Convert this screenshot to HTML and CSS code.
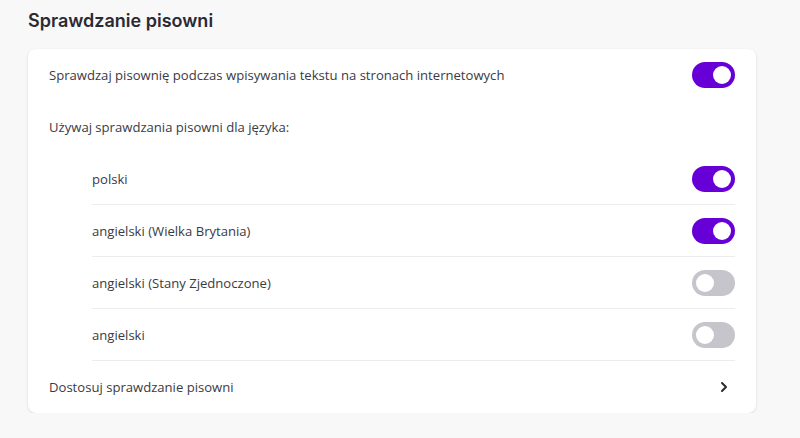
FILE: index.html
```html
<!DOCTYPE html>
<html lang="pl">
<head>
    <meta charset="UTF-8">
    <meta name="viewport" content="width=device-width, initial-scale=1.0">
    <title>Sprawdzanie pisowni</title>
    <link rel="stylesheet" href="styles.css">
</head>
<body>
    <div class="page">
        <h2 class="section-title">Sprawdzanie pisowni</h2>

        <div class="card">
            <div class="row">
                <span>Sprawdzaj pisownię podczas wpisywania tekstu na stronach internetowych</span>
                <span class="toggle on"></span>
            </div>

            <div class="row">
                <span>Używaj sprawdzania pisowni dla języka:</span>
            </div>

            <div class="lang-list">
                <div class="row lang">
                    <span>polski</span>
                    <span class="toggle on"></span>
                </div>
                <div class="row lang">
                    <span>angielski (Wielka Brytania)</span>
                    <span class="toggle on"></span>
                </div>
                <div class="row lang">
                    <span>angielski (Stany Zjednoczone)</span>
                    <span class="toggle"></span>
                </div>
                <div class="row lang">
                    <span>angielski</span>
                    <span class="toggle"></span>
                </div>
            </div>

            <div class="row link">
                <span>Dostosuj sprawdzanie pisowni</span>
                <svg class="chevron" width="8" height="12" viewBox="0 0 8 12">
                    <path d="M2 2 L6 6 L2 10" fill="none" stroke="#2b2a33" stroke-width="2" stroke-linecap="round" stroke-linejoin="round"/>
                </svg>
            </div>
        </div>
    </div>
</body>
</html>
```

FILE: styles.css
```css
body {
    margin: 0;
    background: #f8f8f9;
    font-family: "Open Sans", "Noto Sans", Arial, sans-serif;
    color: #3b3a42;
}

.page {
    padding: 8px 44px 0 28px;
}

.section-title {
    margin: 0 0 15px;
    font-family: Inter, "Noto Sans", sans-serif;
    font-size: 18px;
    font-weight: 600;
    line-height: 26px;
    color: #2b2a33;
}

.card {
    background: #fff;
    border-radius: 8px;
    box-shadow: 0 1px 3px rgba(0, 0, 0, 0.12);
    padding: 0 21px;
}

.row {
    display: flex;
    align-items: center;
    justify-content: space-between;
    height: 52px;
    font-size: 13.1px;
}

.lang-list {
    margin-left: 43px;
}

.lang {
    border-bottom: 1px solid #ececee;
    box-sizing: border-box;
}

.link .chevron {
    margin-right: 7px;
}

.toggle {
    position: relative;
    width: 43px;
    height: 26px;
    border-radius: 13px;
    background: #c6c5cc;
    flex-shrink: 0;
}

.toggle::after {
    content: "";
    position: absolute;
    top: 4px;
    left: 4px;
    width: 18px;
    height: 18px;
    border-radius: 50%;
    background: #fff;
}

.toggle.on {
    background: #6600d6;
}

.toggle.on::after {
    left: 21px;
}
```
